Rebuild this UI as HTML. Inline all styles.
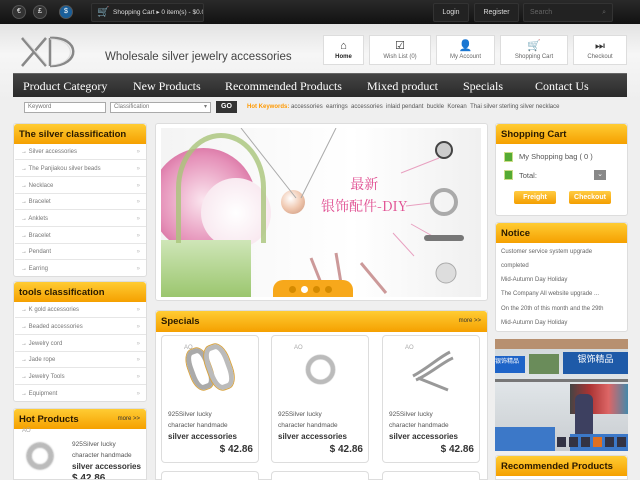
<!DOCTYPE html>
<html><head><meta charset="utf-8"><style>
*{margin:0;padding:0;box-sizing:border-box}
html{width:640px;height:480px;overflow:hidden}
body{width:640px;height:480px;overflow:hidden;background:#efefef;font-family:"Liberation Sans",sans-serif;position:relative;color:#555}
.a{position:absolute}
.top{left:0;top:0;width:640px;height:24px;background:linear-gradient(#2a2a2a,#111)}
.cur{width:14px;height:14px;border-radius:50%;background:#333;border:1px solid #555;color:#fff;font-size:7px;text-align:center;line-height:12px;top:5px}
.tb{background:#222;border:1px solid #333;color:#ddd;font-size:7px;line-height:18px;top:3px;height:19px;border-radius:2px;padding-left:6px;white-space:nowrap;overflow:hidden}
.hdr{left:0;top:24px;width:640px;height:76px;background:linear-gradient(#e3e3e3,#f6f6f6 40%,#eee)}
.nb{top:35px;height:30px;background:#fff;border:1px solid #ddd;font-size:6px;color:#666;text-align:center;padding-top:18px}
.nb i{position:absolute;left:50%;top:5px;transform:translateX(-50%);font-style:normal;font-size:11px;color:#333;line-height:11px}
.nav{left:13px;top:73px;width:614px;height:24px;background:linear-gradient(#444,#2a2a2a);border-top:1px solid #666}
.nav span{position:absolute;top:5px;color:#fff;font-family:"Liberation Serif",serif;font-size:12px}
.inp{top:102px;height:11px;background:#fff;border:1px solid #aaa;font-size:6px;color:#777;padding-left:3px;line-height:9px}
.box{background:#fff;border:1px solid #ddd;border-radius:3px;overflow:hidden}
.hd{height:20px;background:linear-gradient(#fc3,#f5a000);border-radius:3px 3px 0 0;font-size:9.5px;font-weight:bold;color:#2a1a00;padding:5px 0 0 5px;position:relative}
.hd small{position:absolute;right:6px;top:7px;font-size:6px;font-weight:normal;color:#333}
.li{position:absolute;left:1px;width:131px;height:16px;border-bottom:1px solid #e6e6e6;font-size:6px;color:#777;line-height:16px;padding-left:6px}
.li:after{content:"»";position:absolute;right:6px;color:#bbb}
.card{background:#fff;border:1px solid #ddd;border-radius:4px;width:98px;height:128px;top:335px}
.card .ao{position:absolute;left:22px;top:9px;font-size:6px;color:#aaa}
.card .t{position:absolute;left:6px;top:73px;font-size:6.5px;color:#555;line-height:11px;width:92px}
.card b{display:block;font-size:8px;color:#333}
.card .p{position:absolute;right:5px;top:108px;font-size:10px;font-weight:bold;color:#333}
.nt{font-size:6px;color:#666;position:absolute;left:5px}
</style></head><body>
<div class="a top"></div>
<div class="a cur" style="left:12px">€</div>
<div class="a cur" style="left:33px">£</div>
<div class="a cur" style="left:59px;background:#1a5f9a">$</div>
<div class="a tb" style="left:91px;width:113px;padding-left:21px;font-size:6.5px">Shopping Cart ▸ 0 item(s) - $0.00 ▾<span style="position:absolute;left:5px;top:0;font-size:10px;color:#ccc">🛒</span></div>
<div class="a tb" style="left:433px;width:36px;text-align:center;padding:0">Login</div>
<div class="a tb" style="left:474px;width:45px;text-align:center;padding:0">Register</div>
<div class="a tb" style="left:523px;width:90px;color:#666">Search<span style="position:absolute;right:6px">⌕</span></div>

<div class="a hdr"></div>
<svg class="a" style="left:16px;top:32px" width="70" height="40" viewBox="0 0 70 40"><path d="M6 6 L30 34 M30 6 L6 34 M34 6 L34 34 M34 6 C64 4 66 34 34 34" stroke="#888" stroke-width="2.5" fill="none"/><path d="M8 6 L31 33 M34 7 C60 7 62 32 35 33" stroke="#ddd" stroke-width="1" fill="none"/></svg>
<div class="a" style="left:105px;top:51px;font-size:11.5px;color:#444">Wholesale silver jewelry accessories</div>
<div class="a nb" style="left:323px;width:41px;color:#222;font-weight:bold"><i>⌂</i>Home</div>
<div class="a nb" style="left:369px;width:62px"><i>☑</i>Wish List (0)</div>
<div class="a nb" style="left:436px;width:59px"><i>👤</i>My Account</div>
<div class="a nb" style="left:500px;width:68px"><i>🛒</i>Shopping Cart</div>
<div class="a nb" style="left:573px;width:54px"><i>⏭</i>Checkout</div>

<div class="a nav">
<span style="left:10px">Product Category</span><span style="left:120px">New Products</span><span style="left:212px">Recommended Products</span><span style="left:354px">Mixed product</span><span style="left:450px">Specials</span><span style="left:522px">Contact Us</span></div>

<div class="a inp" style="left:24px;width:82px">Keyword</div>
<div class="a inp" style="left:110px;width:101px">Classification<span style="position:absolute;right:3px">▾</span></div>
<div class="a" style="left:216px;top:101px;width:21px;height:12px;background:#333;color:#fff;font-size:7px;text-align:center;line-height:12px;font-weight:bold">GO</div>
<div class="a" style="left:247px;top:104px;font-size:6px;color:#555;white-space:nowrap"><b style="color:#f90">Hot Keywords:</b> accessories &nbsp;earrings &nbsp;accessories &nbsp;inlaid pendant &nbsp;buckle &nbsp;Korean &nbsp;Thai silver sterling silver necklace</div>

<!-- left -->
<div class="a box" style="left:13px;top:123px;width:134px;height:154px">
<div class="hd">The silver classification</div>
<div class="li" style="top:20px">→ Silver accessories</div><div class="li" style="top:37px">→ The Panjiakou silver beads</div><div class="li" style="top:54px">→ Necklace</div><div class="li" style="top:70px">→ Bracelet</div><div class="li" style="top:87px">→ Anklets</div><div class="li" style="top:104px">→ Bracelet</div><div class="li" style="top:120px">→ Pendant</div><div class="li" style="top:137px;border:0">→ Earring</div>
</div>
<div class="a box" style="left:13px;top:281px;width:134px;height:121px">
<div class="hd">tools classification</div>
<div class="li" style="top:20px">→ K gold accessories</div><div class="li" style="top:37px">→ Beaded accessories</div><div class="li" style="top:54px">→ Jewelry cord</div><div class="li" style="top:70px">→ Jade rope</div><div class="li" style="top:87px">→ Jewelry Tools</div><div class="li" style="top:104px;border:0">→ Equipment</div>
</div>
<div class="a box" style="left:13px;top:408px;width:134px;height:72px;border-radius:3px 3px 0 0">
<div class="hd">Hot Products<small>more &gt;&gt;</small></div>
<div class="a" style="left:8px;top:19px;font-size:6px;color:#aaa">AO</div>
<div class="a" style="left:13px;top:34px;width:26px;height:26px;border-radius:50%;border:4px solid #bbb;box-shadow:inset 0 0 2px #666,0 0 2px #666"></div>
<div class="a" style="left:58px;top:30px;font-size:6.5px;line-height:11px;color:#555">925Silver lucky<br>character handmade<br><b style="font-size:8px;color:#333">silver accessories</b><br><b style="font-size:10px;color:#333">$ 42.86</b></div>
</div>

<!-- banner -->
<div class="a box" style="left:155px;top:123px;width:333px;height:178px"></div>
<div class="a" style="left:161px;top:128px;width:320px;height:169px;background:linear-gradient(90deg,#f4f4f4,#fff 60%,#f0f0f0);overflow:hidden">
<div class="a" style="left:-10px;top:20px;width:105px;height:105px;border-radius:50%;background:radial-gradient(#fbe6ef,#e590b8 60%,#c84a85)"></div>
<div class="a" style="left:40px;top:50px;width:70px;height:70px;border-radius:50%;background:radial-gradient(#fff,#f6e0ea)"></div>
<div class="a" style="left:0;top:112px;width:90px;height:57px;background:linear-gradient(#cfe6b8,#9bc66e)"></div>
<div class="a" style="left:15px;top:5px;width:90px;height:110px;border:5px solid #a9c57a;border-bottom:none;border-radius:50% 50% 0 0;opacity:.8"></div>
<div class="a" style="left:120px;top:62px;width:24px;height:24px;border-radius:50%;background:radial-gradient(circle at 40% 35%,#fff,#f0c8b0 50%,#c99277)"></div>
<svg class="a" style="left:0;top:0" width="320" height="169"><path d="M80 0 L135 70 M175 0 L140 70" stroke="#aaa" stroke-width="1" fill="none"/><path d="M240 45 L278 30 M245 78 L270 75 M250 96 L275 110 M232 105 L253 128" stroke="#e8a0c0" stroke-width="1"/><circle cx="283" cy="22" r="8" fill="#ccc" stroke="#444" stroke-width="2"/><circle cx="283" cy="74" r="12" fill="none" stroke="#aaa" stroke-width="4"/><path d="M266 110 h34" stroke="#777" stroke-width="6" stroke-linecap="round"/><circle cx="285" cy="145" r="10" fill="#ddd" stroke="#aaa"/><path d="M150 130 l10 25 M175 125 l5 30 M200 135 l25 30" stroke="#c99" stroke-width="3"/></svg>
<div class="a" style="left:160px;top:45px;color:#e04c90;font-family:'Noto Serif CJK SC',serif;font-size:14px;text-align:center;line-height:22px">最新<br>银饰配件-DIY</div>
<div class="a" style="left:112px;top:152px;width:80px;height:20px;background:#f7a81b;border-radius:10px 10px 0 0"></div>
<div class="a" style="left:128px;top:158px;width:7px;height:7px;border-radius:50%;background:#d48a00"></div>
<div class="a" style="left:140px;top:158px;width:7px;height:7px;border-radius:50%;background:#fff"></div>
<div class="a" style="left:152px;top:158px;width:7px;height:7px;border-radius:50%;background:#d48a00"></div>
<div class="a" style="left:164px;top:158px;width:7px;height:7px;border-radius:50%;background:#d48a00"></div>
</div>

<!-- specials -->
<div class="a box" style="left:155px;top:310px;width:333px;height:170px;border-radius:3px 3px 0 0">
<div class="hd" style="height:21px">Specials<small>more &gt;&gt;</small></div></div>
<div class="a card" style="left:161px"><span class="ao">AO</span>
<div class="a" style="left:27px;top:12px;width:22px;height:42px;border-radius:40%;border:5px solid #aaa;transform:rotate(-20deg);box-shadow:0 0 0 1px #d9a440"></div><div class="a" style="left:45px;top:8px;width:24px;height:46px;border-radius:40%;border:5px solid #bbb;transform:rotate(-20deg);box-shadow:0 0 0 1px #d9a440"></div>
<div class="t">925Silver lucky<br>character handmade<b>silver accessories</b></div><div class="p">$ 42.86</div></div>
<div class="a card" style="left:271px"><span class="ao">AO</span>
<div class="a" style="left:34px;top:19px;width:29px;height:29px;border-radius:50%;border:4px solid #bbb;box-shadow:0 0 1px #555,inset 0 0 1px #555"></div>
<div class="t">925Silver lucky<br>character handmade<b>silver accessories</b></div><div class="p">$ 42.86</div></div>
<div class="a card" style="left:382px"><span class="ao">AO</span>
<svg class="a" style="left:25px;top:12px" width="50" height="45"><path d="M5 28 C20 20 30 10 42 4 M8 32 C22 26 35 14 45 10 M10 30 l30 12" stroke="#999" stroke-width="3" fill="none"/></svg>
<div class="t">925Silver lucky<br>character handmade<b>silver accessories</b></div><div class="p">$ 42.86</div></div>
<div class="a card" style="left:161px;top:471px;height:9px;border-bottom:0;border-radius:4px 4px 0 0"></div><div class="a card" style="left:271px;top:471px;height:9px;border-bottom:0;border-radius:4px 4px 0 0"></div><div class="a card" style="left:382px;top:471px;height:9px;border-bottom:0;border-radius:4px 4px 0 0"></div>

<!-- right -->
<div class="a box" style="left:495px;top:123px;width:133px;height:93px">
<div class="hd">Shopping Cart</div>
<div class="a" style="left:8px;top:28px;width:9px;height:10px;background:#5a3;border:1px solid #cd8"></div>
<div class="a" style="left:23px;top:28px;font-size:7.5px;color:#555">My Shopping bag ( 0 )</div>
<div class="a" style="left:8px;top:46px;width:9px;height:10px;background:#5a3;border:1px solid #cd8"></div>
<div class="a" style="left:23px;top:47px;font-size:7.5px;color:#555">Total:</div>
<div class="a" style="left:98px;top:46px;width:12px;height:10px;background:#888;color:#fff;font-size:7px;text-align:center;line-height:10px">⌄</div>
<div class="a" style="left:18px;top:67px;width:42px;height:13px;background:linear-gradient(#fc4,#f49e00);border-radius:2px;color:#fff;font-size:7px;font-weight:bold;text-align:center;line-height:13px">Freight</div>
<div class="a" style="left:73px;top:67px;width:42px;height:13px;background:linear-gradient(#fc4,#f49e00);border-radius:2px;color:#fff;font-size:7px;font-weight:bold;text-align:center;line-height:13px">Checkout</div>
</div>
<div class="a box" style="left:495px;top:222px;width:133px;height:110px">
<div class="hd">Notice</div>
<div class="nt" style="top:26px">Customer service system upgrade</div>
<div class="nt" style="top:40px">completed</div>
<div class="nt" style="top:54px">Mid-Autumn Day Holiday</div>
<div class="nt" style="top:68px">The Company All website upgrade ...</div>
<div class="nt" style="top:83px">On the 20th of this month and the 29th</div>
<div class="nt" style="top:97px">Mid-Autumn Day Holiday</div>
</div>
<div class="a" style="left:495px;top:339px;width:133px;height:112px;background:linear-gradient(#cfd6da,#e0e5e8 40%,#c8ccd0);overflow:hidden">
<div class="a" style="left:0;top:0;width:133px;height:10px;background:#b79070"></div>
<div class="a" style="left:0;top:17px;width:30px;height:17px;background:#1e64c8;color:#fff;font-size:6px">银饰精品</div>
<div class="a" style="left:34px;top:15px;width:30px;height:20px;background:#6a8c5a"></div>
<div class="a" style="left:68px;top:13px;width:65px;height:22px;background:#1e5aa8;color:#fff;font-size:9px;text-align:center;font-family:'Noto Sans CJK SC',sans-serif">银饰精品</div>
<div class="a" style="left:0;top:40px;width:133px;height:3px;background:#777"></div>
<div class="a" style="left:75px;top:45px;width:58px;height:30px;background:linear-gradient(90deg,#444,#a33,#d66,#48a)"></div>
<div class="a" style="left:0;top:88px;width:60px;height:24px;background:#3c78c8"></div>
<div class="a" style="left:75px;top:95px;width:58px;height:17px;background:#3c78c8"></div>
<div class="a" style="left:80px;top:55px;width:18px;height:40px;background:#3d4060;border-radius:6px 6px 0 0"></div>
<div class="a" style="left:62px;top:98px;width:70px;height:10px;background:repeating-linear-gradient(90deg,#334 0 9px,transparent 9px 12px)"></div>
<div class="a" style="left:98px;top:98px;width:9px;height:10px;background:#e07020"></div>
</div>
<div class="a box" style="left:495px;top:455px;width:133px;height:25px;border-radius:3px 3px 0 0"><div class="hd">Recommended Products</div></div>
</body></html>
